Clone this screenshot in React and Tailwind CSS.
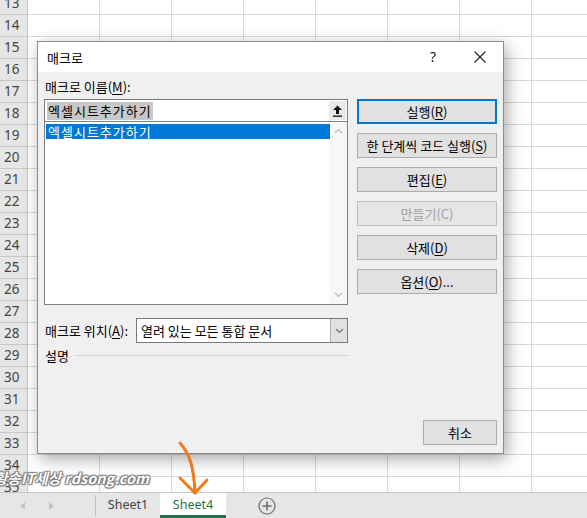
import React from "react";

const KO = "font-['Noto_Sans_CJK_KR','Noto_Sans',sans-serif]";

function U({ children }) {
  return <span className="underline underline-offset-2">{children}</span>;
}

function Btn({ children, primary, disabled, className = "" }) {
  return (
    <div
      className={
        "h-[25px] flex items-center justify-center text-[13px] leading-none " +
        (primary
          ? "border-2 border-[#0078d7] bg-[#e1e1e1] text-black "
          : disabled
          ? "border border-[#bfbfbf] bg-[#e6e6e6] text-[#a0a0a0] "
          : "border border-[#adadad] bg-[#e1e1e1] text-black ") +
        className
      }
    >
      {children}
    </div>
  );
}

function ChevronUp() {
  return (
    <svg width="9" height="6" viewBox="0 0 9 6">
      <path d="M1 5 L4.5 1.5 L8 5" fill="none" stroke="#b9b9b9" strokeWidth="1.2" />
    </svg>
  );
}
function ChevronDown({ color = "#b9b9b9" }) {
  return (
    <svg width="9" height="6" viewBox="0 0 9 6">
      <path d="M1 1 L4.5 4.5 L8 1" fill="none" stroke={color} strokeWidth="1.2" />
    </svg>
  );
}

export default function App() {
  const rows = Array.from({ length: 23 }, (_, i) => 13 + i);
  return (
    <div className={"relative w-[587px] h-[518px] overflow-hidden bg-white flex flex-col " + KO}>
      {/* Spreadsheet grid */}
      <div className="h-[492px] overflow-hidden">
        <div className="-mt-[7px] flex flex-col">
          {rows.map((r) => (
            <div key={r} className="flex h-[22px] shrink-0">
              <div className="w-[28px] shrink-0 h-full bg-[#e6e6e6] border-r border-b border-[#c8c8c8] text-[13.5px] leading-[21px] text-[#444] pl-[4px] font-['Noto_Sans',sans-serif]">
                {r}
              </div>
              {[0, 1, 2, 3, 4, 5, 6].map((c) => (
                <div key={c} className="w-[72px] shrink-0 h-full border-r border-b border-[#d9d9d9]" />
              ))}
              <div className="flex-1 h-full border-b border-[#d9d9d9]" />
            </div>
          ))}
        </div>
      </div>

      {/* Sheet tab bar */}
      <div className="h-[26px] bg-[#e6e6e6] border-t border-[#c6c6c6] flex items-stretch font-['Noto_Sans',sans-serif]">
        <div className="w-[95px] flex items-center">
          <svg className="ml-[20px]" width="5" height="8" viewBox="0 0 5 8">
            <path d="M5 0 L0 4 L5 8 Z" fill="#c4c4c4" />
          </svg>
          <svg className="ml-[24px]" width="5" height="8" viewBox="0 0 5 8">
            <path d="M0 0 L5 4 L0 8 Z" fill="#c4c4c4" />
          </svg>
        </div>
        <div className="w-[65px] flex items-center justify-center border-l border-[#c0c0c0] my-[2px] text-[12.5px] text-[#444]">
          Sheet1
        </div>
        <div className="w-[66px] flex items-center justify-center bg-white border-b-[3px] border-[#217346] text-[12.5px] text-[#217346] pt-[2px]">
          Sheet4
        </div>
        <div className="flex items-center ml-[32px]">
          <svg width="18" height="18" viewBox="0 0 18 18">
            <circle cx="9" cy="9" r="8" fill="none" stroke="#6f6f6f" strokeWidth="1.2" />
            <path d="M9 4.5 V13.5 M4.5 9 H13.5" stroke="#6f6f6f" strokeWidth="1.6" />
          </svg>
        </div>
      </div>

      {/* Dialog */}
      <div className="absolute left-[37px] top-[41px] w-[467px] h-[413px] border border-[#8c8c8c] bg-[#f0f0f0] flex flex-col shadow-[3px_5px_16px_rgba(0,0,0,0.35)]">
        <div className="h-[30px] bg-white flex items-center shrink-0">
          <div className="pl-[9px] text-[13px] text-black leading-none">매크로</div>
          <div className="ml-auto mr-[38px] text-[14px] font-['Noto_Sans',sans-serif] text-[#222] leading-none">?</div>
          <svg className="mr-[17px]" width="12" height="12" viewBox="0 0 12 12">
            <path d="M0.5 0.5 L11.5 11.5 M11.5 0.5 L0.5 11.5" stroke="#222" strokeWidth="1.1" />
          </svg>
        </div>

        <div className="flex-1 flex flex-col px-[6px] pt-[7px] pb-[8px]">
          <div className="flex gap-[9px]">
            {/* Left column */}
            <div className="w-[304px] flex flex-col">
              <div className="h-[16px] leading-[16px] text-[13px] text-black pl-[1px]">
                매크로 이름(<U>M</U>):
              </div>
              <div className="mt-[4px] h-[23px] bg-white border border-[#7a7a7a] flex items-center">
                <div className="ml-[2px] bg-[#c8c8c8] text-[13px] leading-[18px] px-[1px] tracking-[1px] text-black">
                  엑셀시트추가하기
                </div>
                <div className="ml-auto mr-[1px] w-[17px] h-[19px] bg-[#e9e9e9] flex items-center justify-center">
                  <svg width="11" height="12" viewBox="0 0 11 12">
                    <path d="M5.5 0.5 L10 5 L7 5 L7 9 L4 9 L4 5 L1 5 Z" fill="#111" />
                    <rect x="1" y="10.5" width="9" height="1.3" fill="#111" />
                  </svg>
                </div>
              </div>
              <div className="h-[184px] -mt-[1px] bg-white border border-[#828282] flex">
                <div className="flex-1 pt-[2px] pl-[1px]">
                  <div className="h-[15px] bg-[#0078d7] text-white text-[13px] leading-[15px] pl-[2px] tracking-[1px]">
                    엑셀시트추가하기
                  </div>
                </div>
                <div className="w-[17px] bg-[#f7f7f7] flex flex-col items-center justify-between py-[6px]">
                  <ChevronUp />
                  <ChevronDown />
                </div>
              </div>
            </div>
            {/* Right column */}
            <div className="w-[140px] flex flex-col gap-[9px] pt-[20px]">
              <Btn primary>
                실행(<U>R</U>)
              </Btn>
              <Btn>
                한 단계씩 코드 실행(<U>S</U>)
              </Btn>
              <Btn>
                편집(<U>E</U>)
              </Btn>
              <Btn disabled>만들기(C)</Btn>
              <Btn>
                삭제(<U>D</U>)
              </Btn>
              <Btn>
                옵션(<U>O</U>)...
              </Btn>
            </div>
          </div>

          <div className="mt-[13px] w-[304px] flex items-center">
            <div className="w-[92px] text-[13px] leading-none text-black pl-[1px] whitespace-nowrap">
              매크로 위치(<U>A</U>):
            </div>
            <div className="flex-1 h-[25px] bg-white border border-[#7a7a7a] flex items-center">
              <div className="pl-[4px] text-[13px] leading-none text-black">열려 있는 모든 통합 문서</div>
              <div className="ml-auto w-[17px] h-full bg-[#e1e1e1] border-l border-[#adadad] flex items-center justify-center">
                <ChevronDown color="#777" />
              </div>
            </div>
          </div>

          <div className="mt-[4px] w-[304px] flex items-center h-[16px]">
            <div className="text-[13px] leading-none text-black pl-[1px]">설명</div>
            <div className="flex-1 ml-[6px] h-px bg-[#d5d5d5]" />
          </div>

          <div className="mt-auto flex justify-end">
            <Btn className="w-[74px]">취소</Btn>
          </div>
        </div>
      </div>

      {/* Watermark */}
      <div className="absolute left-[-6px] top-[471px] text-[14.5px] font-bold italic text-white leading-none whitespace-nowrap [text-shadow:0_0_1px_#555,1px_1px_1px_#777,-1px_-1px_1px_#888,1px_-1px_1px_#888,-1px_1px_1px_#888]">
        황송IT세상 rdsong.com
      </div>

      {/* Orange arrow */}
      <svg className="absolute left-[170px] top-[438px]" width="45" height="60" viewBox="0 0 45 60">
        <path d="M10 5 C 20 16, 24 30, 25 55" fill="none" stroke="#f07b1c" strokeWidth="3" strokeLinecap="round" />
        <path d="M10 40 L25 55 L37 42" fill="none" stroke="#f07b1c" strokeWidth="3" strokeLinecap="round" strokeLinejoin="round" />
      </svg>
    </div>
  );
}
